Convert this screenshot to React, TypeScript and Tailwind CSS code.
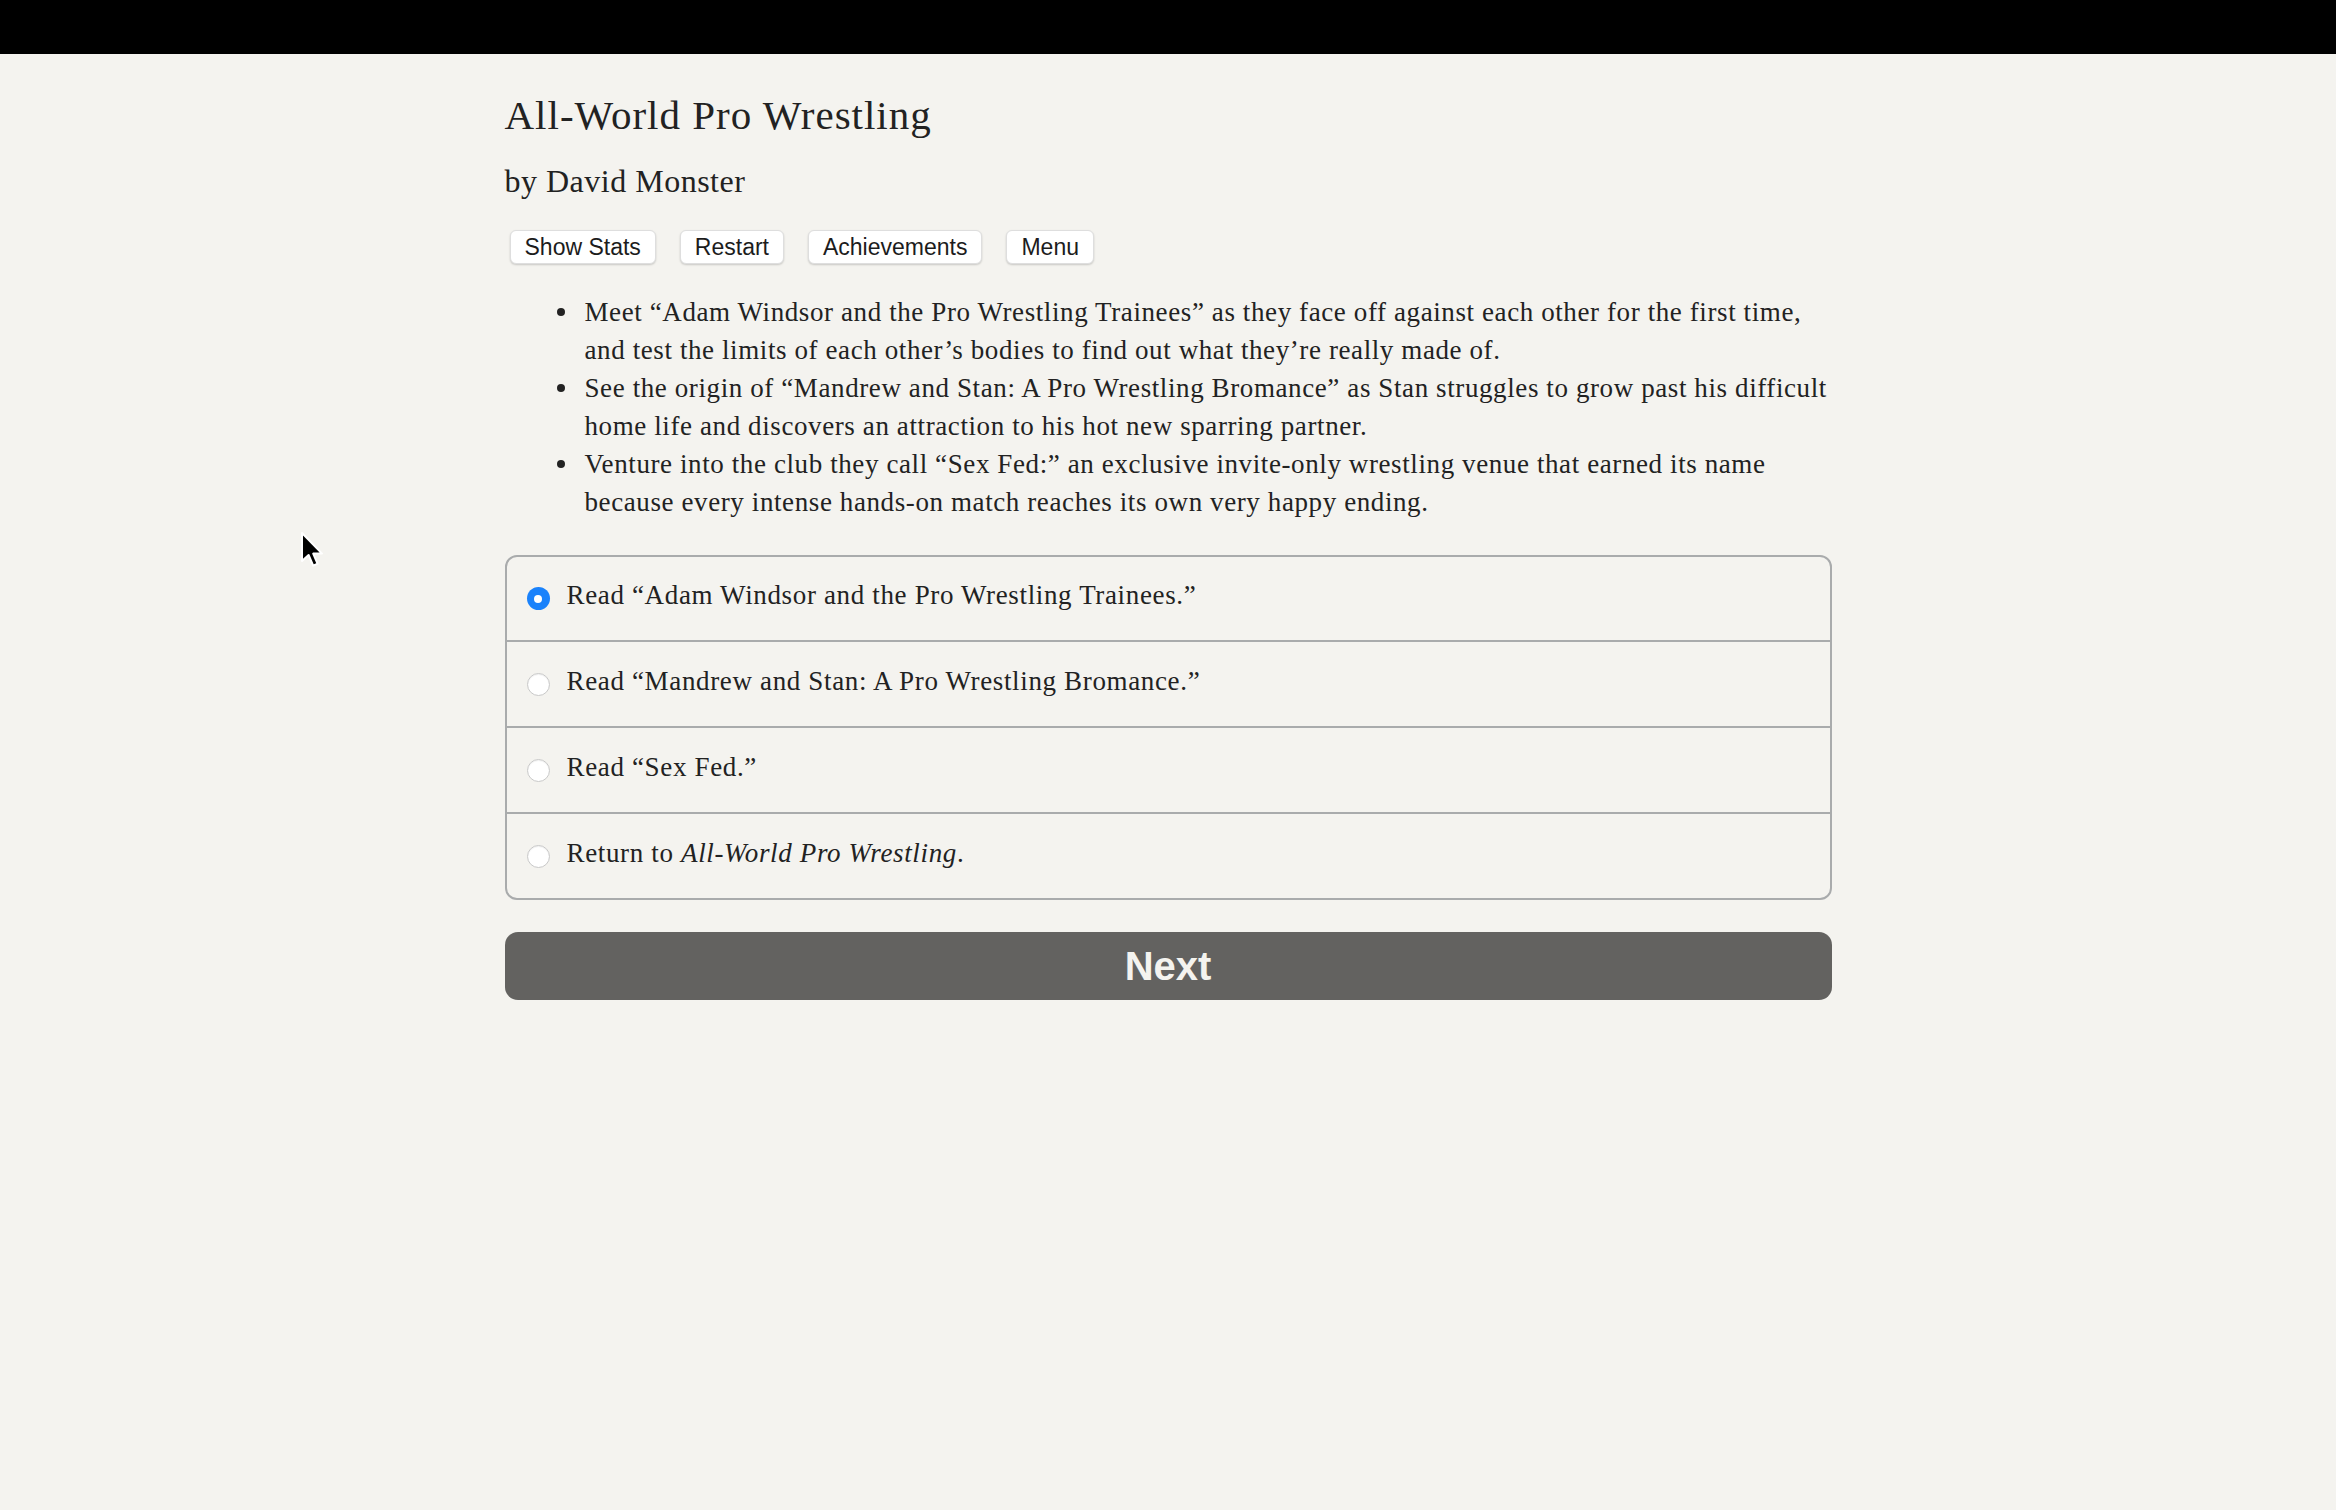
import React from "react";

const serif = { fontFamily: '"Liberation Serif", "Times New Roman", serif' };
const sans = { fontFamily: '"Liberation Sans", Arial, sans-serif' };

function Radio({ checked }: { checked?: boolean }) {
  if (checked) {
    return (
      <span className="flex h-[23px] w-[23px] shrink-0 items-center justify-center rounded-full bg-[#1a82fb]">
        <span className="h-[8px] w-[8px] rounded-full bg-white" />
      </span>
    );
  }
  return (
    <span className="h-[23px] w-[23px] shrink-0 rounded-full border border-[#c8c8c8] bg-white shadow-[inset_0_1px_1px_rgba(0,0,0,0.06)]" />
  );
}

function Btn({ children }: { children: React.ReactNode }) {
  return (
    <button
      className="h-[34px] rounded-[6px] border border-[#dedede] bg-white px-[14px] text-[23px] leading-none text-[#1c1c1c] shadow-[0_1px_2px_rgba(0,0,0,0.18)]"
      style={sans}
    >
      {children}
    </button>
  );
}

function Bullet({ children }: { children: React.ReactNode }) {
  return (
    <li className="flex">
      <span className="flex h-[38px] w-[80px] shrink-0 items-center justify-end pr-[20px]">
        <span className="h-[8px] w-[8px] rounded-full bg-[#222]" />
      </span>
      <span>{children}</span>
    </li>
  );
}

export default function App() {
  const rows: { checked?: boolean; h: string; content: React.ReactNode }[] = [
    { checked: true, h: "h-[85px] border-b-2", content: <>Read “Adam Windsor and the Pro Wrestling Trainees.”</> },
    { h: "h-[86px] border-b-2", content: <>Read “Mandrew and Stan: A Pro Wrestling Bromance.”</> },
    { h: "h-[86px] border-b-2", content: <>Read “Sex Fed.”</> },
    {
      h: "h-[84px]",
      content: (
        <>
          Return to <i>All-World Pro Wrestling</i>.
        </>
      ),
    },
  ];

  return (
    <div className="relative min-h-[1510px] w-full bg-[#f4f3ef] text-[#222222]" style={serif}>
      <div className="h-[54px] w-full bg-black" />

      <div className="mx-auto w-[1327px] pt-[37px]">
        <h1 className="text-[41px] font-normal leading-[49px] tracking-[1px]">All-World Pro Wrestling</h1>
        <h2 className="mt-[21px] text-[32px] font-normal leading-[40px] tracking-[0.5px]">by David Monster</h2>

        <div className="mt-[29px] flex gap-[24px] pl-[5px]">
          <Btn>Show Stats</Btn>
          <Btn>Restart</Btn>
          <Btn>Achievements</Btn>
          <Btn>Menu</Btn>
        </div>

        <ul className="mt-[29px] text-[27px] leading-[38px] tracking-[0.6px]">
          <Bullet>
            Meet “Adam Windsor and the Pro Wrestling Trainees” as they face off against each other for the first time,
            <br />
            and test the limits of each other’s bodies to find out what they’re really made of.
          </Bullet>
          <Bullet>
            See the origin of “Mandrew and Stan: A Pro Wrestling Bromance” as Stan struggles to grow past his difficult
            <br />
            home life and discovers an attraction to his hot new sparring partner.
          </Bullet>
          <Bullet>
            Venture into the club they call “Sex Fed:” an exclusive invite-only wrestling venue that earned its name
            <br />
            because every intense hands-on match reaches its own very happy ending.
          </Bullet>
        </ul>

        <div className="mt-[34px] overflow-hidden rounded-[12px] border-2 border-[#a9abac]">
          {rows.map((r, i) => (
            <div
              key={i}
              className={
                "flex items-center gap-[17px] border-[#a9abac] pl-[20px] text-[27px] tracking-[0.65px] " + r.h
              }
            >
              <Radio checked={r.checked} />
              <span className="-mt-[6px]">{r.content}</span>
            </div>
          ))}
        </div>

        <button
          className="mt-[32px] flex h-[68px] w-full items-center justify-center rounded-[13px] bg-[#636260] text-[40px] font-bold text-[#f4f3ef]"
          style={sans}
        >
          Next
        </button>
      </div>

      <svg
        className="absolute left-[300px] top-[531px]"
        width="26"
        height="38"
        viewBox="0 0 13 19"
      >
        <path
          d="M1 1 L1 15 L4.3 12 L6.6 17.3 L8.8 16.4 L6.6 11.3 L11 11.3 Z"
          fill="#000"
          stroke="#fff"
          strokeWidth="1"
          strokeLinejoin="round"
        />
      </svg>
    </div>
  );
}
